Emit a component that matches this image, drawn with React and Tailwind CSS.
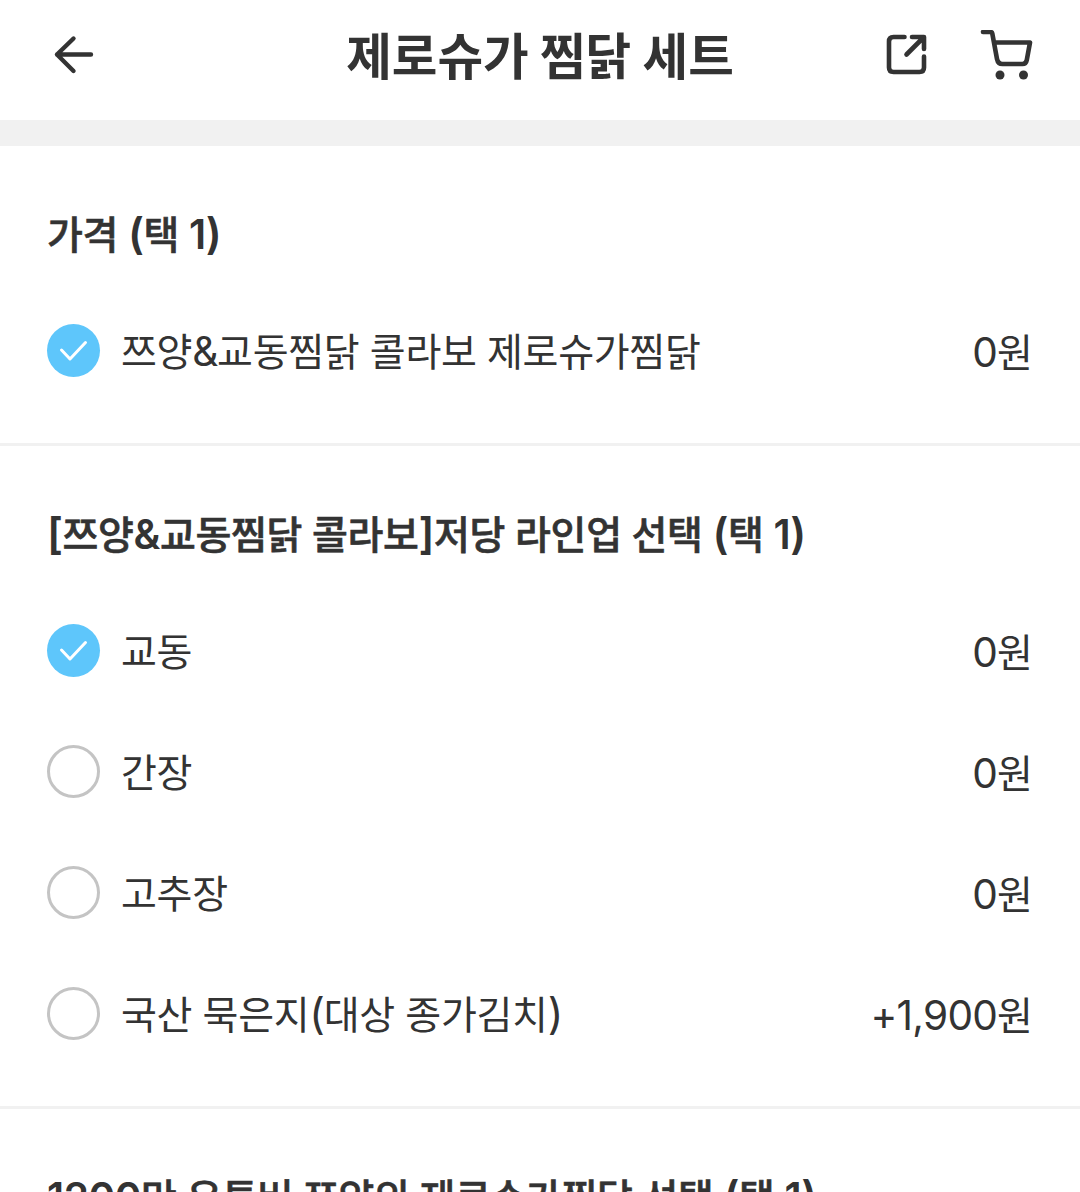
import React from "react";

// Hangul uses the Korean face; Latin runs use Inter at a slightly larger optical size.
function Text({ children, className = "", latin = "tracking-[-0.018em]" }) {
  const runs = children.match(/[0-9,+]+|[&()[\]]|[^0-9,+&()[\]]+/g);
  return (
    <span className={`whitespace-pre ${className}`}>
      {runs.map((run, i) => {
        if (/[0-9,+&]/.test(run))
          return <span key={i} className={`font-['Inter','Noto_Sans_CJK_KR',sans-serif] text-[1.04em] leading-none ${latin}`}>{run}</span>;
        if (/[()[\]]/.test(run))
          return <span key={i} className={`font-['Inter','Noto_Sans_CJK_KR',sans-serif] text-[1.1em] leading-none ${latin}`}>{run}</span>;
        return <span key={i}>{run}</span>;
      })}
    </span>
  );
}

function Header() {
  return (
    <header className="flex h-[120px] items-center justify-between px-[47px]">
      <button className="flex h-[53px] w-[150px] items-center" aria-label="뒤로">
        <svg width="53" height="53" viewBox="0 0 53 53" fill="none" stroke="#333" strokeWidth="4.4" strokeLinecap="round" strokeLinejoin="round">
          <path d="M44 20.500H10M26.500 4.500L10 20.500L26.500 37" />
        </svg>
      </button>
      <h1 className="pb-[15px] text-[49.600px] leading-[60px] font-bold"><Text>제로슈가 찜닭 세트</Text></h1>
      <div className="flex h-[60px] w-[150px] items-center">
        <svg width="150" height="60" viewBox="883 30 150 60" fill="none" stroke="#333" strokeWidth="4.6" strokeLinecap="round" strokeLinejoin="round">
          <path d="M904.500 37H893.500Q889 37 889 41.500V67.500Q889 72 893.500 72H919.500Q924 72 924 67.500V56.500M912 37H924V49M923.500 37.500L906.500 54.500" />
          <path d="M983 32H990.500Q992 32 992.300 33.500L997 59Q998 64 1002.500 64H1022.500Q1026 64 1026.800 60L1030 42.500H994.500" />
          <circle cx="1000" cy="75" r="4.500" fill="#333" stroke="none" />
          <circle cx="1023.500" cy="75" r="4.500" fill="#333" stroke="none" />
        </svg>
      </div>
    </header>
  );
}

function Radio({ checked }) {
  if (!checked) return <span className="size-[53px] shrink-0 rounded-full border-[3px] border-[#c4c4c4]" />;
  return (
    <span className="flex size-[53px] shrink-0 items-center justify-center rounded-full bg-[#5ec6fb]">
      <svg width="53" height="53" viewBox="0 0 53 53" fill="none" stroke="#fff" strokeWidth="3" strokeLinecap="round" strokeLinejoin="round">
        <path d="M14.500 26L23 35L38.500 18.500" />
      </svg>
    </span>
  );
}

function Option({ label, price, checked }) {
  return (
    <div className="flex h-[53px] items-center">
      <Radio checked={checked} />
      <Text className="ml-[21px] flex-1 pb-[3px] leading-[50px] tracking-[-0.3px] [word-spacing:2px]" latin="tracking-[-0.03em]">{label}</Text>
      <Text className="leading-[53px]">{price}</Text>
    </div>
  );
}

function Section({ title, options, className = "" }) {
  return (
    <section className={`px-[47px] ${className}`}>
      <h2 className="h-[60px] leading-[56px] font-medium tracking-[-0.35px] [word-spacing:1.500px] [-webkit-text-stroke:0.6px_#333]">
        <Text latin="font-semibold tracking-[-0.012em] [-webkit-text-stroke:0px]">{title}</Text>
      </h2>
      <div className="mt-[60px] flex flex-col gap-[68px]">
        {options.map((o) => <Option key={o.label} {...o} />)}
      </div>
    </section>
  );
}

export default function App() {
  return (
    <main className="h-[1192px] w-[1080px] overflow-hidden bg-white font-['Noto_Sans_CJK_KR',sans-serif] text-[39px] text-[#333]">
      <Header />
      <div className="h-[26px] bg-[#f1f1f1]" />
      <Section
        className="h-[300px] border-b-[3px] border-[#f1f1f1] pt-[58px]"
        title="가격 (택 1)"
        options={[{ label: "쯔양&교동찜닭 콜라보 제로슈가찜닭", price: "0원", checked: true }]}
      />
      <Section
        className="h-[663px] border-b-[3px] border-[#f1f1f1] pt-[58px]"
        title="[쯔양&교동찜닭 콜라보]저당 라인업 선택 (택 1)"
        options={[
          { label: "교동", price: "0원", checked: true },
          { label: "간장", price: "0원" },
          { label: "고추장", price: "0원" },
          { label: "국산 묵은지(대상 종가김치)", price: "+1,900원" },
        ]}
      />
      <Section className="pt-[58px]" title="1200만 유튜버 쯔양의 제로슈가찜닭 선택 (택 1)" options={[]} />
    </main>
  );
}
